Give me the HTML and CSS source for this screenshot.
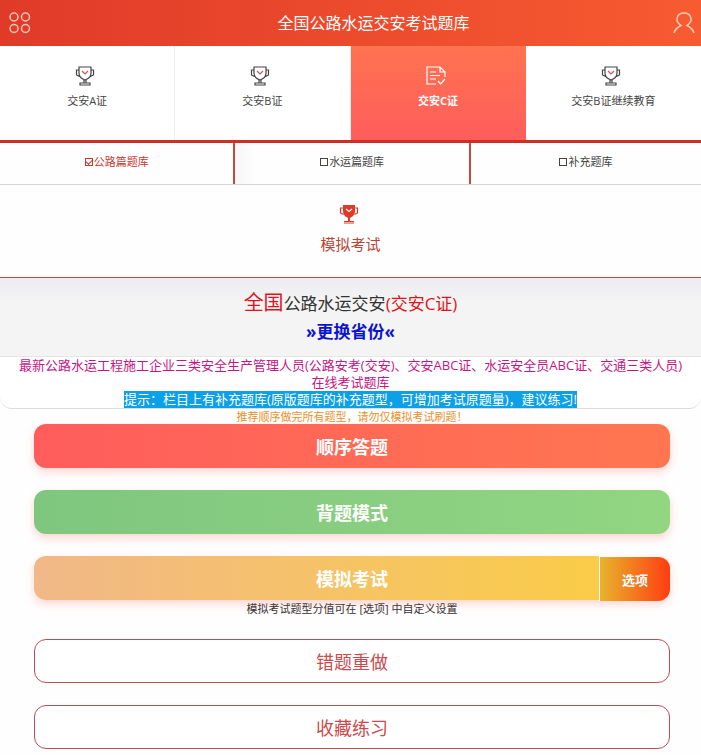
FILE: index.html
```html
<!DOCTYPE html>
<html lang="zh-CN">
<head>
    <meta charset="UTF-8">
    <meta name="viewport" content="width=device-width, initial-scale=1.0">
    <title>全国公路水运交安考试题库</title>
    <link rel="stylesheet" href="styles.css">
</head>
<body>
    <!-- Shared icon shapes -->
    <svg class="sprite" aria-hidden="true">
        <symbol id="cup" viewBox="0 0 20 20">
            <path d="M4 1h12v6c0 4-3 6-6 7-3-1-6-3-6-7zM4 4H1.500v5l3 1.500M16 4h2.500v5l-3 1.500M9 14v3M11 14v3M5 19v-2h10v2z" fill="none" stroke="#444" stroke-width="1.200"/>
            <path d="M7 5l3 3 3-3" fill="none" stroke="#d9534f" stroke-width="1.200"/>
        </symbol>
    </svg>

    <header class="header">
        <a class="header-link" href="#" aria-label="菜单">
            <svg class="header-icon" viewBox="0 0 22 22">
                <g fill="none" stroke="#ffc9b5" stroke-width="1.500">
                    <circle cx="5" cy="5" r="4"/>
                    <circle cx="16.500" cy="5" r="4"/>
                    <circle cx="5" cy="16.500" r="4"/>
                    <circle cx="16.500" cy="16.500" r="4"/>
                </g>
            </svg>
        </a>
        <h1 class="header-title">全国公路水运交安考试题库</h1>
        <a class="header-link user" href="#" aria-label="我的">
            <svg class="header-icon" viewBox="0 0 22 22">
                <path d="M1 21c1-4 4-6 7-7.500C1 9 4 1 11 1s10 8 3 12.500c3 1.500 6 3.500 7 7.500" fill="none" stroke="#ffc9b5" stroke-width="1.500"/>
            </svg>
        </a>
    </header>

    <nav class="tabs">
        <a class="tab" href="#"><svg class="icon"><use href="#cup"/></svg>交安A证</a>
        <a class="tab" href="#"><svg class="icon"><use href="#cup"/></svg>交安B证</a>
        <a class="tab active" href="#">
            <svg class="icon" viewBox="0 0 20 20">
                <path d="M10 18H1V1h13l5 5v5M14 1v5h5M4 6h6M4 9.500h10M4 13h6M12 15l2.500 3 4.500-5" fill="none" stroke="#fff" stroke-width="1.200"/>
            </svg>交安C证
        </a>
        <a class="tab" href="#"><svg class="icon"><use href="#cup"/></svg>交安B证继续教育</a>
    </nav>

    <div class="banks">
        <label class="bank checked"><input type="checkbox" checked>公路篇题库</label>
        <label class="bank"><input type="checkbox">水运篇题库</label>
        <label class="bank"><input type="checkbox">补充题库</label>
    </div>

    <a class="mock" href="#">
        <svg class="icon" viewBox="0 0 20 20">
            <path d="M4 1h12v6c0 4-3 6-5 7v3h4v1H5v-1h4v-3c-2-1-5-3-5-7z" fill="#dd3a27"/>
            <path d="M4 4H1.500v5l3 1.500M16 4h2.500v5l-3 1.500M5 19h10" fill="none" stroke="#dd3a27" stroke-width="1.200"/>
            <path d="M7 5l3 2.500L13 5" fill="none" stroke="#fff" stroke-width="1.200"/>
        </svg>模拟考试
    </a>

    <section class="panel">
        <div class="panel-head">
            <h2 class="panel-title"><span class="region">全国</span>公路水运交安<span class="red">(交安C证)</span></h2>
            <a class="change" href="#">»更换省份«</a>
        </div>
        <p class="intro">最新公路水运工程施工企业三类安全生产管理人员(公路安考(交安)、交安ABC证、水运安全员ABC证、交通三类人员)在线考试题库</p>
        <p class="hint"><mark>提示：栏目上有补充题库(原版题库的补充题型，可增加考试原题量)，建议练习!</mark></p>
    </section>

    <main class="actions">
        <p class="note orange">推荐顺序做完所有题型，请勿仅模拟考试刷题！</p>
        <button class="btn btn-red" type="button">顺序答题</button>
        <button class="btn btn-green" type="button">背题模式</button>
        <div class="exam">
            <button class="btn btn-yellow" type="button">模拟考试</button>
            <button class="option" type="button">选项</button>
        </div>
        <p class="note">模拟考试题型分值可在 [选项] 中自定义设置</p>
        <button class="btn btn-line" type="button">错题重做</button>
        <button class="btn btn-line" type="button">收藏练习</button>
    </main>
</body>
</html>
```

FILE: styles.css
```css
* {
    box-sizing: border-box;
}

body {
    margin: 0;
    background: #fefefe;
    color: #444;
    font-family: "Open Sans", "Noto Sans CJK SC", sans-serif;
    font-size: 11px;
    line-height: 16px;
    text-align: center;
}

a {
    color: inherit;
    text-decoration: none;
}

h1, h2, p {
    margin: 0;
    font-weight: normal;
}

button {
    font-family: inherit;
    cursor: pointer;
}

.sprite {
    display: none;
}

/* Top bar */
.header {
    position: relative;
    display: flex;
    align-items: center;
    height: 46px;
    background: linear-gradient(to right, #e03a29, #f75b31);
    color: #fff;
}

.header-link {
    display: flex;
    width: 46px;
    padding-left: 9px;
}

/* Floats over the bar so the title keeps its full width */
.user {
    position: absolute;
    right: 6px;
    width: auto;
    padding: 0;
}

.header-icon {
    width: 22px;
    height: 22px;
}

.header-title {
    flex: 1;
    font-size: 16px;
    line-height: 24px;
}

/* Certificate tabs */
.tabs {
    display: grid;
    grid-template-columns: repeat(4, 1fr);
    background: #fff;
    border-bottom: 3px solid #cf2e27;
}

.tab {
    display: flex;
    flex-direction: column;
    align-items: center;
    gap: 7px;
    padding: 20px 0 31px;
    border-right: 1px solid #eee;
}

.tab:nth-child(n+3) {
    border-right: 0;
}

.tab.active {
    background: linear-gradient(to bottom, #ff7350, #ff5d5c);
    color: #fff;
    font-weight: bold;
}

.icon {
    display: block;
    width: 20px;
    height: 20px;
    margin-right: 4px;
}

/* Question bank switch */
.banks {
    display: grid;
    grid-template-columns: calc(33.3% + 2px) calc(33.3% + 2px) 1fr;
    border-bottom: 1px solid #d6d6d6;
}

.bank {
    display: flex;
    align-items: center;
    justify-content: center;
    height: 41px;
    padding-bottom: 4px;
    border-right: 2px solid #c24840;
}

.bank:last-child {
    border-right: 0;
}

.bank:nth-child(2) {
    background: linear-gradient(to right, #f6f6f6, #fefefe 20px);
}

.bank.checked {
    color: #c8372c;
}

.bank input {
    appearance: none;
    width: 8px;
    height: 8px;
    margin: 0 1px 0 0;
    border: 1px solid currentColor;
    color: inherit;
}

.bank input:checked::before {
    content: "";
    display: block;
    width: 6px;
    height: 3px;
    border-left: 1px solid;
    border-bottom: 1px solid;
    transform: rotate(-45deg);
}

.mock {
    display: flex;
    flex-direction: column;
    align-items: center;
    gap: 9px;
    padding: 19px 0 22px;
    border-bottom: 1px solid #c4473c;
    color: #b94334;
    font-size: 15px;
    line-height: 22px;
}

/* Notice panel */
.panel {
    border-bottom: 1px solid #ddd;
    border-radius: 0 0 12px 12px;
    background: #fff;
}

.panel-head {
    padding: 10px 0;
    border-bottom: 1px solid #e6e6e6;
    background: linear-gradient(to bottom, #ececf0, #f4f4f4 24px);
}

.panel-title {
    color: #333;
    font-size: 17px;
    line-height: 29px;
}

.region {
    color: #dc1420;
    font-size: 20px;
}

.red {
    color: #dc1420;
}

.change {
    display: block;
    color: #0d14d0;
    font-size: 17px;
    font-weight: bold;
    line-height: 28px;
}

.intro, .hint {
    padding: 0 14px;
    font-size: 13px;
    line-height: 17px;
}

.intro {
    color: #c71585;
}

.hint mark {
    display: inline-block;
    background: #0ba0e8;
    color: #fff;
}

/* Practice buttons */
.actions {
    display: flex;
    flex-direction: column;
    gap: 22px;
    padding: 0 31px 6px 34px;
}

.note {
    margin-top: -22px;
    color: #333;
    line-height: 17px;
}

.note.orange {
    margin: 0 0 -22px;
    color: #e8922e;
    line-height: 15px;
}

.btn {
    display: block;
    width: 100%;
    height: 44px;
    padding: 0;
    border: 0;
    border-radius: 12px;
    color: #fff;
    font-size: 18px;
    font-weight: bold;
    box-shadow: 0 4px 8px rgba(255, 93, 80, 0.25);
}

.btn-red {
    background: linear-gradient(to right, #ff5d5c, #ff7650);
}

.btn-green {
    background: linear-gradient(to right, #7fc67f, #92d682);
}

.btn-yellow {
    background: linear-gradient(to right, #f1b888, #fbcf40);
}

.btn-line {
    border: 1px solid #bd4c50;
    background: #fff;
    color: #cc4a4d;
    font-weight: normal;
    box-shadow: none;
}

.exam {
    position: relative;
}

/* Sits over the right end of the exam button */
.option {
    position: absolute;
    top: 0;
    right: 0;
    width: 71px;
    height: 45px;
    padding: 0;
    border: solid #fff;
    border-width: 1px 0 0 1px;
    border-radius: 0 12px 12px 0;
    background: linear-gradient(to right, #e8b42c, #ff3d12);
    color: #fff;
    font-size: 13px;
    font-weight: bold;
}
```
